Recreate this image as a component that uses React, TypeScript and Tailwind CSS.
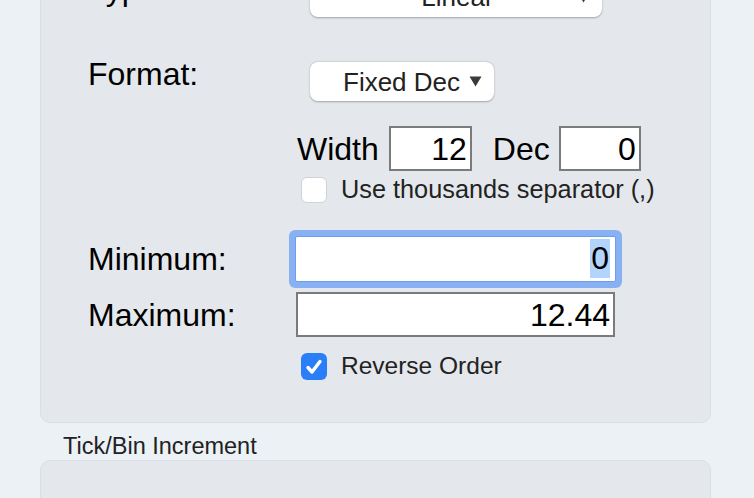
import React from 'react';

const font = { fontFamily: '"Liberation Sans", Arial, sans-serif' };

const Caret: React.FC = () => (
  <svg width="13" height="11" viewBox="0 0 13 11">
    <polygon points="0.5,0.5 12.5,0.5 6.5,10.5" fill="#3a3a3a" />
  </svg>
);

const SelectBox: React.FC<{ label: string; width: string; centered?: boolean }> = ({ label, width, centered }) => (
  <div
    className={`relative flex h-full items-center rounded-[8px] bg-white shadow-[0_0.5px_2px_rgba(0,0,0,0.3)] ${width} ${
      centered ? 'justify-center' : 'pl-[33px]'
    }`}
  >
    <span className="text-[26px] leading-none text-[#222]">{label}</span>
    <span className={centered ? 'absolute right-[12px] flex' : 'ml-[9px] flex'}>
      <Caret />
    </span>
  </div>
);

const NumBox: React.FC<{ value: string; width: string }> = ({ value, width }) => (
  <div className={`flex h-[45px] items-center justify-end border-2 border-[#7b7b7b] bg-white pr-[3px] text-[32px] leading-none text-black ${width}`}>
    {value}
  </div>
);

export default function App() {
  return (
    <div className="h-[498px] w-[754px] overflow-hidden bg-[#ebf1f5] pl-[40px]" style={font}>
      {/* main axis panel, top part scrolled out of view */}
      <div className="-mt-[60px] h-[483px] w-[671px] rounded-[10px] border border-[#dadfe3] bg-[#e4e8ec] pl-[47px] pt-[36px]">
        <div className="flex h-[40px] items-center">
          <span className="mb-[16px] w-[222px] text-[32px] leading-none text-black">Type:</span>
          <SelectBox label="Lineal" width="w-[292px]" centered />
        </div>

        <div className="mt-[45px] flex h-[39px] items-center">
          <span className="mb-[16px] w-[222px] text-[32px] leading-none text-black">Format:</span>
          <SelectBox label="Fixed Dec" width="w-[184px]" />
        </div>

        <div className="mt-[25px] flex h-[45px] items-center pl-[209px] text-[32px] leading-none text-black">
          <span>Width</span>
          <div className="ml-[10px]">
            <NumBox value="12" width="w-[83px]" />
          </div>
          <span className="ml-[21px]">Dec</span>
          <div className="ml-[9px]">
            <NumBox value="0" width="w-[82px]" />
          </div>
        </div>

        <div className="mt-[6px] flex h-[26px] items-center pl-[213px]">
          <div className="h-[26px] w-[26px] rounded-[6px] border border-[#cfd3d7] bg-white" />
          <span className="ml-[14px] text-[25.3px] leading-none text-[#222]">Use thousands separator (,)</span>
        </div>

        <div className="mt-[33px] flex h-[45px] items-center">
          <span className="w-[207px] text-[32px] leading-none text-black">Minimum:</span>
          <div className="flex h-[46px] w-[321px] items-center justify-end rounded-[2px] border border-[#6f9ded] bg-white pr-[5px] shadow-[0_0_0_6px_#88b1f3]">
            <span className="inline-block bg-[#b3d4fd] px-[1px] text-[32px] leading-[39px] text-black">0</span>
          </div>
        </div>

        <div className="mt-[11px] flex h-[45px] items-center">
          <span className="w-[208px] text-[32px] leading-none text-black">Maximum:</span>
          <NumBox value="12.44" width="w-[319px]" />
        </div>

        <div className="mt-[16px] flex h-[27px] items-center pl-[213px]">
          <div className="flex h-[27px] w-[26px] items-center justify-center rounded-[6px] bg-[#2a7ef7]">
            <svg width="20" height="20" viewBox="0 0 20 20">
              <polyline points="4,10.5 8,15 16,4.5" fill="none" stroke="white" strokeWidth="3.4" strokeLinecap="round" strokeLinejoin="round" />
            </svg>
          </div>
          <span className="ml-[14px] text-[24.5px] leading-none text-[#222]">Reverse Order</span>
        </div>
      </div>

      <div className="h-[37px] pl-[23px] pt-[12px] text-[23.5px] leading-[22px] text-[#222]">Tick/Bin Increment</div>

      <div className="h-[60px] w-[671px] rounded-[10px] border border-[#dadfe3] bg-[#e4e8ec]" />
    </div>
  );
}
